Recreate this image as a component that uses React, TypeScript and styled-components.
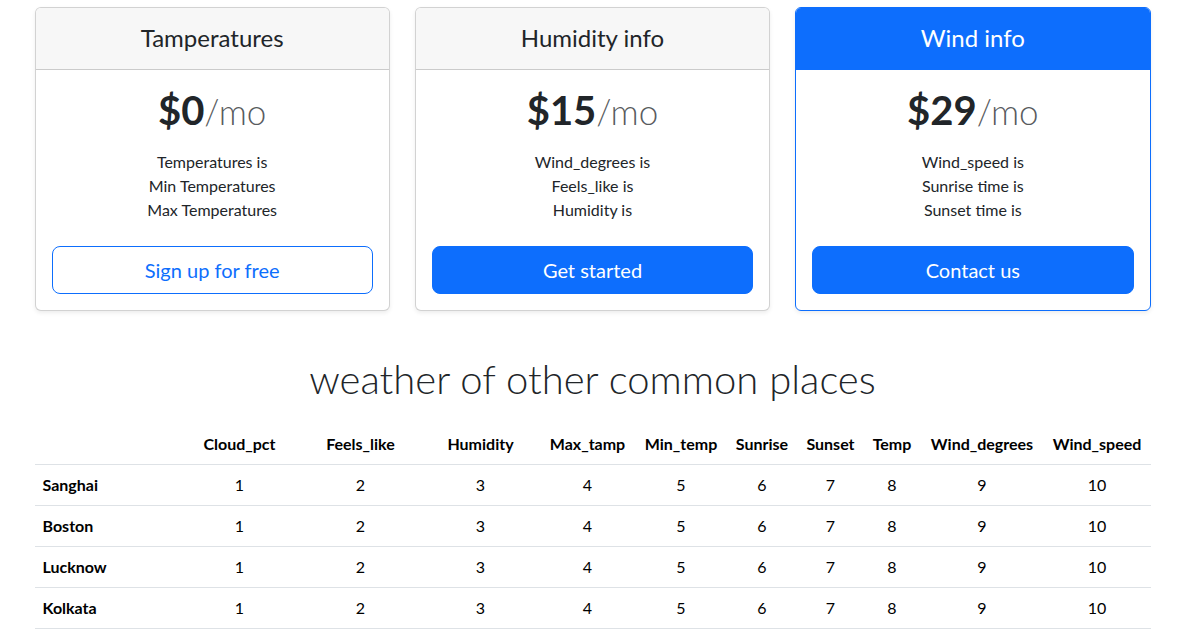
import React from "react";
import styled, { createGlobalStyle, css } from "styled-components";

const GlobalStyle = createGlobalStyle`
	* { box-sizing: border-box; }
	body {
		margin: 0;
		background: #fff;
		color: #212529;
		font-family: Lato, "Open Sans", "Noto Sans", sans-serif;
		font-size: 16px;
		line-height: 1.5;
	}
`;

type Plan = {
	title: string;
	price: number;
	lines: string[];
	cta: string;
	featured?: boolean;
	outline?: boolean;
};

const PLANS: Plan[] = [
	{
		title: "Tamperatures",
		price: 0,
		lines: ["Temperatures is", "Min Temperatures", "Max Temperatures"],
		cta: "Sign up for free",
		outline: true,
	},
	{
		title: "Humidity info",
		price: 15,
		lines: ["Wind_degrees is", "Feels_like is", "Humidity is"],
		cta: "Get started",
	},
	{
		title: "Wind info",
		price: 29,
		lines: ["Wind_speed is", "Sunrise time is", "Sunset time is"],
		cta: "Contact us",
		featured: true,
	},
];

const COLUMNS = [
	"Cloud_pct",
	"Feels_like",
	"Humidity",
	"Max_tamp",
	"Min_temp",
	"Sunrise",
	"Sunset",
	"Temp",
	"Wind_degrees",
	"Wind_speed",
];

// largeurs relevées sur la capture, la mise en page auto dépend trop de la police
const COL_WIDTHS = [145, 120, 122, 118, 96, 91, 71, 66, 57, 123, 107];

const CITIES = ["Sanghai", "Boston", "Lucknow", "Kolkata"];

export default function App() {
	return (
		<>
			<GlobalStyle />
			<Container>
				<CardRow>
					{PLANS.map((p) => (
						<Card key={p.title} $featured={p.featured}>
							<CardHeader $featured={p.featured}>
								<CardTitle>{p.title}</CardTitle>
							</CardHeader>
							<CardBody>
								<Price>
									${p.price}
									<Per>/mo</Per>
								</Price>
								<Features>
									{p.lines.map((l) => (
										<li key={l}>{l}</li>
									))}
								</Features>
								<Button $outline={p.outline}>{p.cta}</Button>
							</CardBody>
						</Card>
					))}
				</CardRow>

				<Heading>weather of other common places</Heading>

				<Table>
					<colgroup>
						{COL_WIDTHS.map((w, i) => (
							<col key={i} style={{ width: w }} />
						))}
					</colgroup>
					<thead>
						<tr>
							<HeadCell />
							{COLUMNS.map((c) => (
								<HeadCell key={c}>{c}</HeadCell>
							))}
						</tr>
					</thead>
					<tbody>
						{CITIES.map((city) => (
							<tr key={city}>
								<RowHead>{city}</RowHead>
								{COLUMNS.map((c, i) => (
									<Cell key={c}>{i + 1}</Cell>
								))}
							</tr>
						))}
					</tbody>
				</Table>
			</Container>
		</>
	);
}

const Container = styled.div`
	max-width: 1116px;
	margin: 0 auto;
	padding-top: 7px;
`;

const CardRow = styled.div`
	display: grid;
	grid-template-columns: repeat(3, 1fr);
	gap: 25px;
	margin-bottom: 44px;
`;

const Card = styled.div<{ $featured?: boolean }>`
	display: flex;
	flex-direction: column;
	border: 1px solid ${(p) => (p.$featured ? "#0d6efd" : "rgba(0, 0, 0, 0.175)")};
	border-radius: 6px;
	background: #fff;
	box-shadow: 0 2px 4px rgba(0, 0, 0, 0.075);
	overflow: hidden;
`;

const CardHeader = styled.div<{ $featured?: boolean }>`
	padding: 16px;
	text-align: center;
	border-bottom: 1px solid
		${(p) => (p.$featured ? "#0d6efd" : "rgba(0, 0, 0, 0.175)")};
	background: ${(p) => (p.$featured ? "#0d6efd" : "#f7f7f7")};
	color: ${(p) => (p.$featured ? "#fff" : "#212529")};
`;

const CardTitle = styled.h4`
	margin: 0;
	font-size: 24px;
	font-weight: 400;
	line-height: 1.2;
`;

const CardBody = styled.div`
	padding: 16px;
	text-align: center;
`;

const Price = styled.h1`
	margin: 0 0 8px;
	font-size: 40px;
	font-weight: 700;
	line-height: 1.2;
	color: #212529;
`;

const Per = styled.small`
	font-size: 0.875em;
	font-weight: 300;
	color: rgba(33, 37, 41, 0.75);
`;

const Features = styled.ul`
	list-style: none;
	margin: 16px 0 24px;
	padding: 0;
	font-size: 16px;
	line-height: 24px;
`;

const Button = styled.button<{ $outline?: boolean }>`
	display: block;
	width: 100%;
	height: 48px;
	padding: 8px 16px;
	border-radius: 8px;
	border: 1px solid #0d6efd;
	font-family: inherit;
	font-size: 20px;
	line-height: 1.5;
	cursor: pointer;
	${(p) =>
		p.$outline
			? css`
					background: #fff;
					color: #0d6efd;
				`
			: css`
					background: #0d6efd;
					color: #fff;
				`}
`;

const Heading = styled.h2`
	margin: 0 0 21px;
	text-align: center;
	font-size: 40px;
	font-weight: 300;
	line-height: 1.2;
	color: #212529;
`;

const Table = styled.table`
	width: 100%;
	table-layout: fixed;
	border-collapse: collapse;
	color: #000;
	font-size: 16px;
	line-height: 24px;
`;

const HeadCell = styled.th`
	padding: 8px;
	font-weight: 700;
	text-align: center;
	white-space: nowrap;
	border-bottom: 1px solid #dee2e6;
`;

const RowHead = styled.th`
	padding: 8px;
	font-weight: 700;
	text-align: left;
	border-bottom: 1px solid #dee2e6;
`;

const Cell = styled.td`
	padding: 8px;
	text-align: center;
	border-bottom: 1px solid #dee2e6;
`;
